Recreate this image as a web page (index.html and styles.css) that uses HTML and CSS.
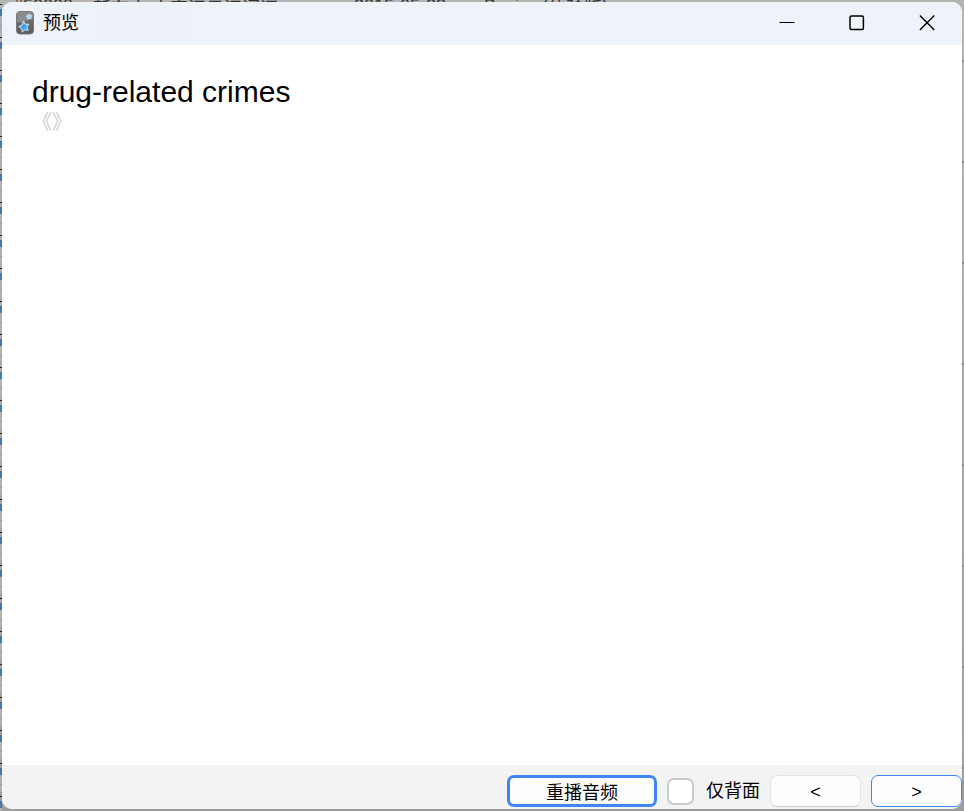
FILE: index.html
```
<!DOCTYPE html>
<html lang="zh-CN">
<head>
    <meta charset="UTF-8">
    <meta name="viewport" content="width=device-width, initial-scale=1.0">
    <title>预览</title>
    <link rel="stylesheet" href="styles.css">
</head>
<body>

<!-- 后面的浏览窗口 -->
<div class="behind" aria-hidden="true">
    <div class="row">
        <span class="col-id">#50000</span>
        <span class="col-name">新东方 大字汉日汉词汇</span>
        <span class="col-date">2015-05-28</span>
        <span class="col-type">Basic</span>
        <span class="col-note">（体验版）</span>
    </div>
</div>

<div class="window">
    <header class="titlebar">
        <svg class="logo" width="18" height="24" viewBox="0 0 18 24">
            <defs>
                <linearGradient id="card" x1="0" y1="0" x2="0" y2="1">
                    <stop offset="0" stop-color="#777"/>
                    <stop offset="1" stop-color="#5c5c5c"/>
                </linearGradient>
            </defs>
            <rect x="0.5" y="0.5" width="17" height="22.5" rx="3.5" fill="url(#card)" stroke="#777"/>
            <path d="M1 11 Q10 12 17 6 V4 Q17 1 14 1 H4 Q1 1 1 4 Z" fill="#8d8d8d"/>
            <path d="M7.4 10 L9.2 13.2 L12.8 13.2 L10.9 16.2 L12.2 19.4 L8.9 18.8 L6.2 21 L5.7 17.6 L2.8 15.6 L6.2 13.9 Z" fill="#3fa5ee" stroke="#d3ebfc" stroke-width="1" stroke-linejoin="round"/>
            <path d="M12.8 2.8 L14 4.3 L16 4.4 L15 6.1 L15.4 8 L13.4 7.5 L11.7 8.5 L11.6 6.4 L10 5.1 L12 4.5 Z" fill="#a5dafb" stroke="#d3ebfc" stroke-width="0.6" stroke-linejoin="round"/>
        </svg>
        <h1>预览</h1>
        <div class="controls">
            <button type="button" aria-label="最小化">
                <svg width="16" height="16" viewBox="0 0 16 16"><path d="M0.5 7.5 H15.5"/></svg>
            </button>
            <button type="button" aria-label="最大化">
                <svg width="16" height="16" viewBox="0 0 16 16"><rect x="1" y="1" width="13.4" height="13.4" rx="1.5" stroke-width="1.5"/></svg>
            </button>
            <button type="button" aria-label="关闭">
                <svg width="16" height="16" viewBox="0 0 16 16"><path d="M0.9 0.5 L15.3 14.9 M15.3 0.5 L0.9 14.9" stroke-width="1.4"/></svg>
            </button>
        </div>
    </header>

    <main class="card">
        <div class="front">drug-related crimes</div>
        <div class="source">《》</div>
    </main>

    <footer class="toolbar">
        <button type="button" class="btn replay">重播音频</button>
        <label class="back-only"><input type="checkbox">仅背面</label>
        <button type="button" class="btn prev">&lt;</button>
        <button type="button" class="btn next">&gt;</button>
    </footer>
</div>

</body>
</html>
```
FILE: styles.css
```
* {
    box-sizing: border-box;
}

body {
    margin: 0;
    padding: 2px;
    height: 100vh;
    overflow: hidden;
    position: relative;
    font-family: "Liberation Sans", "Noto Sans CJK SC", sans-serif;
    font-size: 18px;
    color: #000;
    background: linear-gradient(#b4b4b4, #9c9c9c);
}

/* 后面的窗口, 只露出一点边 */
.behind {
    position: absolute;
    inset: 0;
    background:
        repeating-linear-gradient(transparent 0 4px, #222 4px 5px, transparent 5px 9px, #4677ab 9px 16px, #b0b0b0 16px 25px, #999 25px 26px, #b0b0b0 26px 30px, #9fb5ad 30px 33px) 0 0 / 2px 100% no-repeat,
        repeating-linear-gradient(transparent 0 60px, #858585 60px 62px, transparent 62px 101px) 100% 0 / 2px 100% no-repeat;
}

.row {
    display: flex;
    height: 2px;
    padding-left: 13px;
    overflow: hidden;
    line-height: 12px;
    color: #333;
    white-space: nowrap;
}

.col-id {
    width: 80px;
}

.col-name {
    width: 261px;
    line-height: 18px;
}

.col-date {
    width: 130px;
}

.col-type {
    width: 46px;
}

.col-note {
    line-height: 18px;
}

/* 预览窗口 */
.window {
    position: relative;
    display: flex;
    flex-direction: column;
    height: 100%;
    overflow: hidden;
    border-radius: 10px;
    background: #fff;
}

.titlebar {
    display: flex;
    align-items: center;
    height: 43px;
    padding: 0 0 2px 14px;
    background: linear-gradient(90deg, #eef2fa, #edf3f8 30%);
}

.titlebar h1 {
    flex: 1;
    margin: 0 0 0 9px;
    font-size: 18px;
    font-weight: 400;
    line-height: 24px;
}

.controls {
    display: flex;
}

.controls button {
    display: flex;
    align-items: center;
    justify-content: center;
    width: 70px;
    height: 41px;
    padding: 0;
    border: 0;
    background: none;
}

.controls svg {
    fill: none;
    stroke: #000;
}

.card {
    flex: 1;
    padding: 30px;
}

.front {
    font-size: 30px;
    line-height: 34px;
}

.source {
    font-size: 20px;
    line-height: 26px;
    color: #ccc;
}

.toolbar {
    display: flex;
    align-items: center;
    justify-content: flex-end;
    gap: 10px;
    height: 44px;
    padding-top: 8px;
    background: #f3f3f3;
}

.btn {
    width: 91px;
    height: 32px;
    padding: 2px 0 0;
    border: 1px solid #e3e3e3;
    border-bottom-color: #ccc;
    border-radius: 7px;
    background: #fdfdfd;
    font: inherit;
    color: #000;
}

.replay {
    width: 150px;
    padding: 0;
    border: 3px solid #3f86f5;
}

.next {
    border-color: #3f86f5;
}

.back-only {
    display: flex;
    align-items: center;
    gap: 12px;
    line-height: 24px;
}

.back-only input {
    appearance: none;
    width: 27px;
    height: 27px;
    margin: 0;
    border: 2px solid #cbcbcb;
    border-radius: 7px;
    background: #fff;
}
```
